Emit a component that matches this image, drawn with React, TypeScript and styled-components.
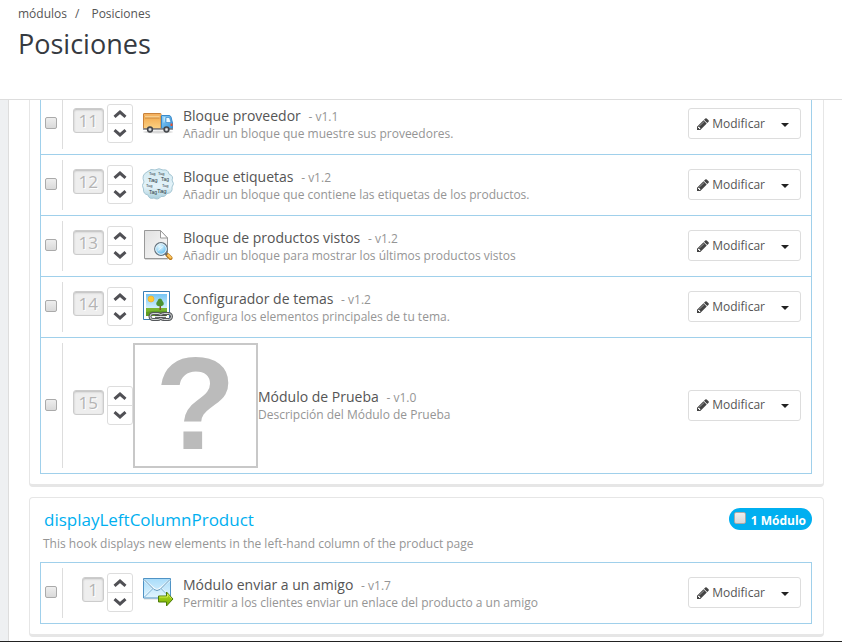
import React from "react";
import styled, { createGlobalStyle } from "styled-components";

const GlobalStyle = createGlobalStyle`
  *, *::before, *::after { box-sizing: border-box; }
  body {
    margin: 0;
    background: #eef0f2;
    color: #555;
    font: 12px/18px "Open Sans", "Noto Sans", sans-serif;
  }
  h1, h2, h3, p, ul, ol { margin: 0; padding: 0; font-weight: 400; list-style: none; }
  button, input { font: inherit; color: inherit; margin: 0; }
`;

const Page = styled.div`
  min-height: 100vh;
  display: flex;
  flex-direction: column;
`;

const PageHead = styled.header`
  position: relative;
  z-index: 1;
  height: 100px;
  padding: 5px 18px 0;
  background: #fff;
  border-bottom: 1px solid #ddd;
`;

const Crumbs = styled.ol`
  display: flex;
  li + li::before { content: "/"; margin: 0 12px 0 8px; }
  a { color: #555; text-decoration: none; }
`;

const PageTitle = styled.h1`
  margin-top: 4px;
  font-size: 27px;
  line-height: 34px;
  color: #363a41;
`;

const Content = styled.main`
  flex: 1;
  margin-left: 8px;
  padding: 0 18px 4px 20px;
  border-left: 1px solid #ddd;
  background: #fff;
  overflow: hidden;
`;

const PanelStack = styled.div`
  display: flex;
  flex-direction: column;
  gap: 10px;
  margin-top: -18px;
`;

const Panel = styled.section`
  padding: 10px 11px 10px 10px;
  border: 1px solid #e6e6e6;
  border-bottom-width: 3px;
  border-radius: 4px;
  background: #fff;
`;

const HookHead = styled.header`
  display: flex;
  justify-content: space-between;
  align-items: flex-start;
  padding-left: 4px;
`;

const HookName = styled.h2`
  font-size: 17px;
  line-height: 24px;
  color: #00aff0;
`;

const HookText = styled.p`
  padding: 3px 0 9px 3px;
  color: #959595;
`;

const CountBadge = styled.label`
  display: flex;
  align-items: flex-start;
  gap: 5px;
  height: 22px;
  padding: 4px 6px 0 5px;
  border-radius: 11px;
  background: #00aff0;
  color: #fff;
  font-weight: 700;
  white-space: nowrap;
`;

const Check = styled.input`
  appearance: none;
  flex: none;
  width: 12px;
  height: 12px;
  border: 1px solid #aaa;
  border-radius: 2px;
  background: linear-gradient(#eee, #d9d9d9);
  &:checked { background: #00aff0; }
`;

const ModuleList = styled.ul`
  border: 1px solid #a0d0eb;
  border-bottom: 0;
`;

const Row = styled.li`
  display: flex;
  padding: 5px 10px 5px 4px;
  border-bottom: 1px solid #a0d0eb;
`;

const Pick = styled.div`
  display: flex;
  align-items: center;
  width: 18px;
  padding-bottom: 2px;
  border-right: 1px solid #ddd;
`;

const Order = styled.div`
  display: flex;
  align-items: center;
  justify-content: flex-end;
  gap: 3px;
  width: 70px;
  padding-bottom: 1px;
`;

const Position = styled.span`
  margin-bottom: 6px;
  padding: 0 5px;
  border: 1px solid #ccc;
  border-radius: 3px;
  background: #eee;
  box-shadow: inset 0 1px 2px #bbb;
  color: #b4b4b4;
  text-shadow: 1px 1px #fff;
  font-size: 17px;
  line-height: 23px;
`;

const Mover = styled.div`
  display: flex;
  flex-direction: column;
  width: 26px;
  border: 1px solid #ddd;
  border-radius: 3px;
  background: #fff;
`;

const MoveButton = styled.button`
  display: grid;
  place-items: center;
  height: 18px;
  padding: 0;
  border: 0;
  background: none;
  & + & { height: 19px; border-top: 1px solid #ddd; }
`;

const Picture = styled.div`
  display: grid;
  place-items: center;
  min-width: 50px;
  min-height: 50px;
  svg { margin-bottom: 2px; }
`;

const Unknown = styled.div`
  display: grid;
  place-items: center;
  width: 125px;
  height: 125px;
  padding-bottom: 4px;
  border: 2px solid #c8c8c8;
  color: #bbb;
  font: bold 132px/117px "Liberation Sans", Arial, sans-serif;
`;

const Info = styled.div`
  flex: 1;
  align-self: center;
`;

const Name = styled.h3`
  font-size: 14px;
  line-height: 18px;
  small { margin-left: 4px; font-size: 12px; color: #959595; }
`;

const Description = styled.p`
  line-height: 16px;
  color: #959595;
`;

const Actions = styled.div`
  display: flex;
  align-self: center;
  height: 31px;
  margin-bottom: 1px;
  border: 1px solid #ddd;
  border-radius: 3px;
  background: #fff;
`;

const ActionButton = styled.button<{ $narrow?: boolean }>`
  display: flex;
  align-items: center;
  justify-content: center;
  gap: 2px;
  width: ${(p) => (p.$narrow ? "31px" : "auto")};
  padding: ${(p) => (p.$narrow ? "2px 0 0" : "0 4px 0 7px")};
  border: 0;
  background: none;
`;

const Footer = styled.footer`
  height: 1px;
  background: #222;
`;

const Chevron = ({ down = false }: { down?: boolean }) => (
  <svg width="14" height="10" viewBox="0 0 14 10" fill="none" stroke="#505055" strokeWidth="3" aria-hidden="true">
    <path d={down ? "M1.5 2.2 7 7 12.5 2.2" : "M1.5 7.8 7 3 12.5 7.8"} />
  </svg>
);

const Pencil = () => (
  <svg width="14" height="14" viewBox="0 0 1792 1792" fill="#444" aria-hidden="true">
    <path d="M491 1536l91-91-235-235-91 91v107h128v128h107zm523-928q0-22-22-22-10 0-17 7l-542 542q-7 7-7 17 0 22 22 22 10 0 17-7l542-542q7-7 7-17zm-54-192l416 416-832 832h-416v-416l832-832zm683 96q0 53-37 90l-166 166-416-416 166-165q36-38 90-38 53 0 91 38l235 234q37 39 37 91z" />
  </svg>
);

const Caret = () => (
  <svg width="8" height="4" viewBox="0 0 8 4" aria-hidden="true">
    <path d="M0 0h8L4 4z" fill="#222" />
  </svg>
);

const Truck = () => (
  <svg width="32" height="32" viewBox="0 0 32 32" aria-hidden="true">
    <defs>
      <linearGradient id="cargo" x2="0" y2="1">
        <stop stopColor="#f0a244" />
        <stop offset="1" stopColor="#fbd183" />
      </linearGradient>
      <linearGradient id="cab" x2="1" y2="1">
        <stop stopColor="#8fd0f7" />
        <stop offset="1" stopColor="#3795dc" />
      </linearGradient>
    </defs>
    <ellipse cx="16" cy="25" rx="15" ry="1.5" fill="#000" opacity=".15" />
    <rect x="1.5" y="6.5" width="17.5" height="15" rx=".5" fill="url(#cargo)" stroke="#c9823a" />
    <path d="M2 8h17" stroke="#f7bd76" />
    <path d="M3 10h14.500" stroke="#fff0c8" />
    <path d="M3 11h14.500" stroke="#cd8a3e" />
    <path d="M19.500 8.500h7.500q1.500 0 2 1.500l1.500 6v5.500h-11z" fill="url(#cab)" stroke="#3a8acb" />
    <path d="M21.500 10h2l-1 5.500h-1z" fill="#b9e3fb" />
    <path d="M24 10.500h3.500l1.500 5h-5z" fill="#eefaff" stroke="#3a8acb" strokeWidth=".7" />
    <path d="M28.500 16.500h2v2.500h-2z" fill="#e8502c" />
    <path d="M1 22h30" stroke="#777b81" strokeWidth="1.500" />
    <g fill="#b9bcc0" stroke="#44474c" strokeWidth="1.500">
      <circle cx="8" cy="22.500" r="2.400" />
      <circle cx="24.500" cy="22.500" r="2.400" />
    </g>
    <circle cx="8" cy="22.500" r=".8" fill="#eee" />
    <circle cx="24.500" cy="22.500" r=".8" fill="#eee" />
  </svg>
);

const tags: [number, number, number][] = [
  [7, 7, 4], [16, 6.5, 4], [6, 14, 6], [19, 12.5, 5],
  [4, 19, 4], [20, 19, 4], [7, 26, 5], [15, 25, 6],
];

const TagCloud = () => (
  <svg width="32" height="32" viewBox="0 0 32 32" aria-hidden="true">
    <defs>
      <linearGradient id="cloud" x2="0" y2="1">
        <stop stopColor="#d2e9f1" />
        <stop offset=".6" stopColor="#e4f3f9" />
        <stop offset="1" stopColor="#a9cfdd" />
      </linearGradient>
    </defs>
    <path
      d="M5 4q4-4 8-2 4-2.500 8 0 5-1 6 4 5 2 3 6 3 4 0 7 1 6-5 6.500-2 4-6 3-3 4-7 1.500-5 1.500-6-3-5-1-4.500-6-2.500-4 .5-7Q-1 7 5 4z"
      fill="url(#cloud)"
      stroke="#a6c6d3"
    />
    <g fill="#2c3c44" fontFamily="Liberation Sans, Arial, sans-serif">
      {tags.map(([x, y, size], i) => (
        <text key={i} x={x} y={y} fontSize={size}>Tag</text>
      ))}
    </g>
  </svg>
);

const PageLens = () => (
  <svg width="32" height="32" viewBox="0 0 32 32" aria-hidden="true">
    <defs>
      <linearGradient id="sheet" x2="1" y2="1">
        <stop stopColor="#e0e0e0" />
        <stop offset="1" stopColor="#fafafa" />
      </linearGradient>
      <radialGradient id="lens" cx=".4" cy=".3">
        <stop stopColor="#e8faff" />
        <stop offset="1" stopColor="#7ec9f2" />
      </radialGradient>
    </defs>
    <path d="M3 30.500h23" stroke="#000" opacity=".15" />
    <path d="M2.500 1.500h16l7 7.500v20.500h-23z" fill="url(#sheet)" stroke="#999" />
    <path d="M18.500 1.500V9h7z" fill="#fff" stroke="#999" />
    <path d="m25.500 26 3 3" stroke="#b8791e" strokeWidth="4" strokeLinecap="round" />
    <path d="m26 26 2.500 2.500" stroke="#ffc65c" strokeWidth="2.400" strokeLinecap="round" />
    <path d="m23 24 2 2" stroke="#666" strokeWidth="2" />
    <circle cx="19" cy="20" r="6.300" fill="url(#lens)" stroke="#65727c" strokeWidth="1.200" />
    <circle cx="19" cy="20" r="5.300" fill="none" stroke="#e9f3f8" />
    <path d="m15.500 22 6-5" stroke="#fff" opacity=".6" />
  </svg>
);

const ThemePicture = () => (
  <svg width="32" height="32" viewBox="0 0 32 32" aria-hidden="true">
    <defs>
      <linearGradient id="sky" x2="0" y2="1">
        <stop stopColor="#74c4f3" />
        <stop offset="1" stopColor="#d9f3fd" />
      </linearGradient>
    </defs>
    <path d="M1.500 1.500h26v28h-26z" fill="#fff" stroke="#397db5" />
    <path d="M4 4h21v15H4z" fill="url(#sky)" />
    <path d="M4 18h21v8H4z" fill="#79b530" />
    <path d="M4 22q10-2 21-1v5H4z" fill="#5f9c24" />
    <circle cx="9" cy="9" r="3" fill="#ffc832" stroke="#f4a81d" strokeWidth=".6" />
    <path d="M17.500 14h1.500v6h-1.500z" fill="#87552d" />
    <path d="M18 8.500q2 0 2.500 2.500 2 2 1 4-1.500 1.500-3.500 1-2.500.5-3.500-1-1-2 1-4 .5-2.500 2.500-2.500z" fill="#4c9230" />
    <g fill="none">
      <rect x="8" y="23.500" width="11" height="6" rx="3" stroke="#55585b" strokeWidth="3" />
      <rect x="18.500" y="23.500" width="11" height="6" rx="3" stroke="#55585b" strokeWidth="3" />
      <rect x="8" y="23.500" width="11" height="6" rx="3" stroke="#d5d7d8" />
      <rect x="18.500" y="23.500" width="11" height="6" rx="3" stroke="#d5d7d8" />
      <path d="M13 26.500h11" stroke="#44474a" strokeWidth="2.600" />
      <path d="M13 26.500h11" stroke="#e3e5e6" />
    </g>
  </svg>
);

const MailForward = () => (
  <svg width="32" height="32" viewBox="0 0 32 32" aria-hidden="true">
    <defs>
      <linearGradient id="mail" x2="0" y2="1">
        <stop stopColor="#a8dcfa" />
        <stop offset="1" stopColor="#e2f5fe" />
      </linearGradient>
      <linearGradient id="send" x2="0" y2="1">
        <stop stopColor="#b8e01f" />
        <stop offset="1" stopColor="#72ab05" />
      </linearGradient>
    </defs>
    <path d="M2 23h27" stroke="#000" opacity=".15" />
    <path d="M1.500 2.500h27v19.500h-27z" fill="url(#mail)" stroke="#4f93c5" />
    <path d="m2.500 20 9-9m16 9-9-9" stroke="#fff" opacity=".7" fill="none" />
    <path d="m2.500 21 9-9m16 9-9-9" stroke="#7fb2d4" fill="none" />
    <path d="m2 4 10 8.500q3 2.500 6 0L28 4" stroke="#fff" opacity=".8" strokeWidth="2" fill="none" />
    <path d="m2 3.500 10 10q3 2 6 0l10-10" stroke="#5f97bd" fill="none" />
    <path d="M16.500 20h8v-4l6.500 7-6.500 7v-4h-8z" fill="url(#send)" stroke="#4c7b0a" strokeLinejoin="round" />
    <path d="M17.500 21h8v-3l4 4.500" stroke="#d8f063" strokeWidth=".8" fill="none" />
  </svg>
);

interface Module {
  position: number;
  name: string;
  version: string;
  description: string;
  picture: React.ReactNode;
}

const columnModules: Module[] = [
  { position: 11, name: "Bloque proveedor", version: "v1.1", description: "Añadir un bloque que muestre sus proveedores.", picture: <Truck /> },
  { position: 12, name: "Bloque etiquetas", version: "v1.2", description: "Añadir un bloque que contiene las etiquetas de los productos.", picture: <TagCloud /> },
  { position: 13, name: "Bloque de productos vistos", version: "v1.2", description: "Añadir un bloque para mostrar los últimos productos vistos", picture: <PageLens /> },
  { position: 14, name: "Configurador de temas", version: "v1.2", description: "Configura los elementos principales de tu tema.", picture: <ThemePicture /> },
  { position: 15, name: "Módulo de Prueba", version: "v1.0", description: "Descripción del Módulo de Prueba", picture: <Unknown>?</Unknown> },
];

const productModules: Module[] = [
  { position: 1, name: "Módulo enviar a un amigo", version: "v1.7", description: "Permitir a los clientes enviar un enlace del producto a un amigo", picture: <MailForward /> },
];

const Modules = ({ items }: { items: Module[] }) => (
  <ModuleList>
    {items.map((m) => (
      <Row key={m.name}>
        <Pick>
          <Check type="checkbox" aria-label={m.name} />
        </Pick>
        <Order>
          <Position>{m.position}</Position>
          <Mover>
            <MoveButton type="button" aria-label="Subir"><Chevron /></MoveButton>
            <MoveButton type="button" aria-label="Bajar"><Chevron down /></MoveButton>
          </Mover>
        </Order>
        <Picture>{m.picture}</Picture>
        <Info>
          <Name>{m.name} <small>- {m.version}</small></Name>
          <Description>{m.description}</Description>
        </Info>
        <Actions>
          <ActionButton type="button"><Pencil />Modificar</ActionButton>
          <ActionButton type="button" $narrow aria-label="Más acciones"><Caret /></ActionButton>
        </Actions>
      </Row>
    ))}
  </ModuleList>
);

export default function App() {
  return (
    <Page>
      <GlobalStyle />
      <PageHead>
        <nav>
          <Crumbs>
            <li><a href="#modulos">módulos</a></li>
            <li><a href="#posiciones">Posiciones</a></li>
          </Crumbs>
        </nav>
        <PageTitle>Posiciones</PageTitle>
      </PageHead>
      <Content>
        <PanelStack>
          <Panel>
            <Modules items={columnModules} />
          </Panel>
          <Panel>
            <HookHead>
              <HookName>displayLeftColumnProduct</HookName>
              <CountBadge><Check type="checkbox" />1 Módulo</CountBadge>
            </HookHead>
            <HookText>This hook displays new elements in the left-hand column of the product page</HookText>
            <Modules items={productModules} />
          </Panel>
        </PanelStack>
      </Content>
      <Footer />
    </Page>
  );
}
